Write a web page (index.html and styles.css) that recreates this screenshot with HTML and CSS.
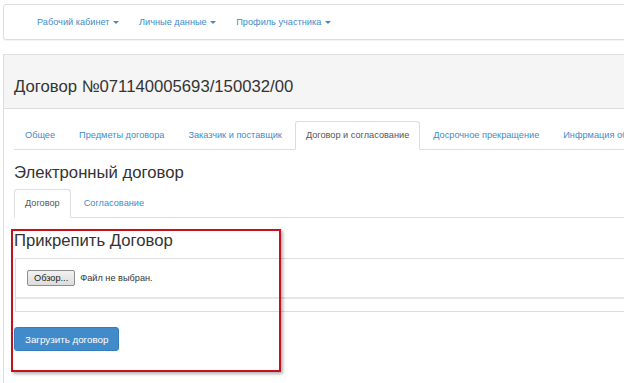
FILE: index.html
```html
<!DOCTYPE html>
<html lang="ru">
  <head>
    <meta charset="utf-8">
    <title>Договор</title>
    <link rel="stylesheet" href="styles.css">
  </head>
  <body>
    <div class="navbar">
      <ul class="menu">
        <li><a href="#">Рабочий кабинет <span class="caret"></span></a></li>
        <li><a href="#">Личные данные <span class="caret"></span></a></li>
        <li><a href="#">Профиль участника <span class="caret"></span></a></li>
      </ul>
    </div>

    <div class="panel">
      <div class="panel-heading">
        <h3>Договор №071140005693/150032/00</h3>
      </div>
      <div class="panel-body">
        <ul class="tabs">
          <li><a href="#">Общее</a></li>
          <li><a href="#">Предметы договора</a></li>
          <li><a href="#">Заказчик и поставщик</a></li>
          <li class="active"><a href="#">Договор и согласование</a></li>
          <li><a href="#">Досрочное прекращение</a></li>
          <li><a href="#">Инфрмация об исполнении</a></li>
        </ul>

        <h3>Электронный договор</h3>
        <ul class="tabs">
          <li class="active"><a href="#">Договор</a></li>
          <li><a href="#">Согласование</a></li>
        </ul>

        <div class="attach">
          <h3>Прикрепить Договор</h3>
          <div class="upload-box">
            <div class="upload-body">
              <span class="file-btn">Обзор...</span>
              <span class="file-name">Файл не выбран.</span>
            </div>
            <div class="upload-footer"></div>
          </div>
          <button class="btn-primary">Загрузить договор</button>
          <!-- red annotation frame -->
          <div class="highlight"></div>
        </div>
      </div>
    </div>
  </body>
</html>
```

FILE: styles.css
```css
html, body {
  margin: 0;
  overflow: hidden;
}
body {
  font-family: "Liberation Sans", Arial, sans-serif;
  font-size: 9.2px;
  color: #333;
  background: #fff;
}
a {
  color: #428bca;
  text-decoration: none;
}
h3 {
  font-size: 16.7px;
  font-weight: normal;
  line-height: 18px;
  margin: 14px 0 7px;
}

/* top navbar */
.navbar {
  margin: 4px -20px 0 3px;
  height: 34px;
  border: 1px solid #dedede;
  border-radius: 3px;
  box-shadow: 0 1px 1px rgba(0, 0, 0, 0.05);
  background: #fff;
}
.menu {
  list-style: none;
  margin: 0;
  padding: 0 0 0 23px;
  display: flex;
}
.menu a {
  display: block;
  padding: 0 10px;
  line-height: 35px;
}
.caret {
  display: inline-block;
  width: 0;
  height: 0;
  margin-left: 1px;
  vertical-align: middle;
  border-top: 3px solid #428bca;
  border-left: 3px solid transparent;
  border-right: 3px solid transparent;
}

/* main panel */
.panel {
  margin: 14px -20px 0 3px;
  border: 1px solid #ddd;
  border-bottom: none;
  height: 400px;
}
.panel-heading {
  background: #f5f5f5;
  border-bottom: 1px solid #ddd;
  height: 54px;
  padding: 0 10px;
  box-sizing: border-box;
}
.panel-heading h3 {
  margin: 0;
  padding-top: 23px;
}
.panel-body {
  padding: 12px 10px 0;
}

/* tabs */
.tabs {
  list-style: none;
  margin: 0;
  padding: 0;
  display: flex;
  border-bottom: 1px solid #ddd;
}
.tabs li {
  margin: 0 2px -1px 0;
  white-space: nowrap;
}
.tabs a {
  display: block;
  padding: 7px 10px 8px;
  line-height: 12px;
  border: 1px solid transparent;
  border-radius: 3px 3px 0 0;
}
.tabs .active a {
  color: #555;
  background: #fff;
  border-color: #ddd #ddd transparent;
}

/* attach block */
.attach {
  position: relative;
}
.attach h3 {
  margin-bottom: 8px;
}
.upload-box {
  border: 1px solid #ddd;
  border-right: none;
  margin-left: 1px;
}
.upload-body {
  display: flex;
  align-items: center;
  gap: 5px;
  padding: 11px 11px;
  border-bottom: 2px solid #e6e6e6;
}
.file-btn {
  display: inline-block;
  height: 14px;
  line-height: 14px;
  padding: 0 6px;
  border: 1px solid #8e8e8e;
  border-radius: 2px;
  background: linear-gradient(#f2f2f2, #dcdcdc);
  color: #222;
}
.file-name {
  color: #333;
}
.upload-footer {
  height: 12px;
}
.btn-primary {
  margin-top: 15px;
  height: 24px;
  padding: 0 10px;
  font-family: inherit;
  font-size: 9.8px;
  color: #fff;
  background: #428bca;
  border: 1px solid #357ebd;
  border-radius: 3px;
}
.highlight {
  position: absolute;
  left: -3px;
  top: -3px;
  width: 266px;
  height: 139px;
  border: 2px solid #c8101a;
  box-shadow: 2px 2px 3px rgba(0, 0, 0, 0.3);
}
```
